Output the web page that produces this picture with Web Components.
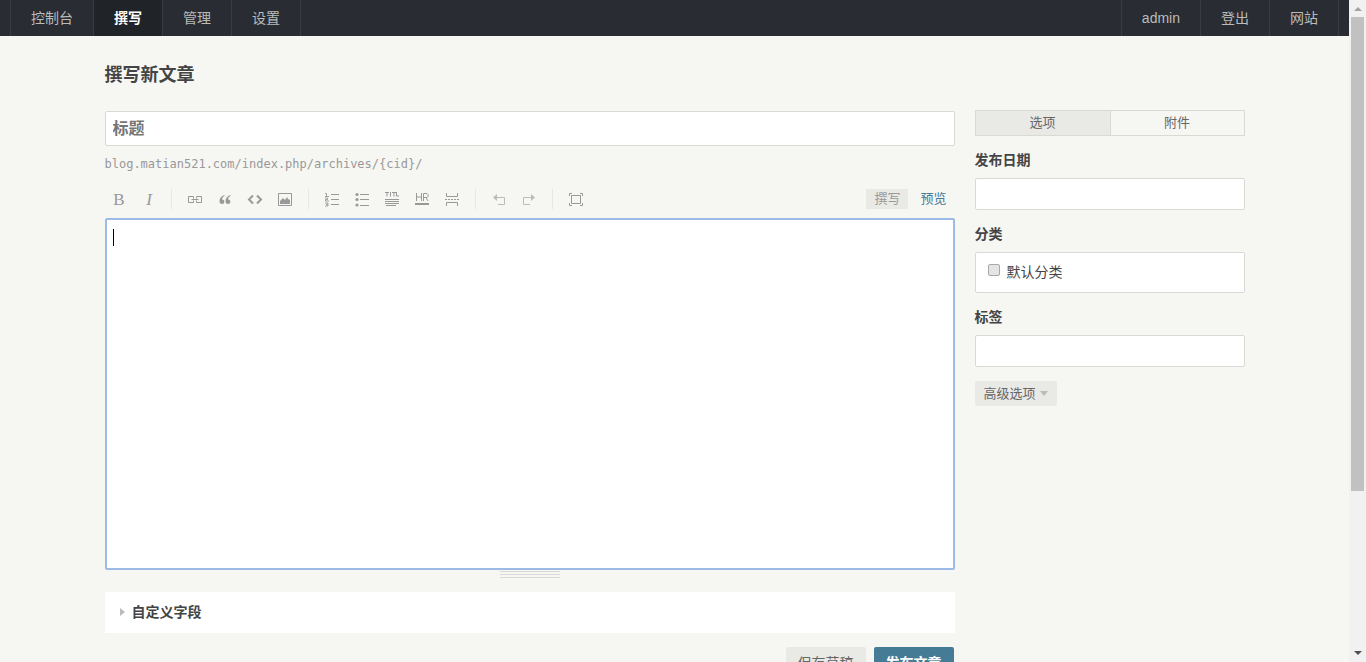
<!DOCTYPE html>
<html lang="zh">
<head>
<meta charset="utf-8">
<title>撰写新文章</title>
<style>
html, body { margin: 0; height: 100%; }
body {
  overflow: hidden;
  background: #f6f6f3;
  color: #444;
  font: 14px/20px "Liberation Sans", "Noto Sans CJK SC", sans-serif;
}
</style>
</head>
<body>
<app-window>
  <top-nav>
    <nav-item>控制台</nav-item>
    <nav-item current>撰写</nav-item>
    <nav-item>管理</nav-item>
    <nav-item>设置</nav-item>
    <nav-item slot="end">admin</nav-item>
    <nav-item slot="end">登出</nav-item>
    <nav-item slot="end">网站</nav-item>
  </top-nav>
  <write-page heading="撰写新文章">
    <post-editor></post-editor>
    <option-panel slot="side"></option-panel>
  </write-page>
</app-window>
<script>
function define(name, html, setup) {
  const tpl = document.createElement('template');
  tpl.innerHTML = html;
  customElements.define(name, class extends HTMLElement {
    constructor() {
      super();
      this.attachShadow({ mode: 'open' }).append(tpl.content.cloneNode(true));
    }
    connectedCallback() { if (setup) setup(this, this.shadowRoot); }
  });
}

define('scroll-bar', `
<style>
:host { display: flex; flex-direction: column; align-items: center; width: 17px; background: #f1f1f1; }
svg { display: block; width: 17px; height: 17px; }
.track { flex: 1; }
.thumb { width: 13px; height: 75.5%; background: #c1c1c1; }
</style>
<svg viewBox="0 0 17 17"><path d="M5 11l4-4 4 4z" fill="#a3a3a3"/></svg>
<div class="track"><div class="thumb"></div></div>
<svg viewBox="0 0 17 17"><path d="M5 6h8l-4 4z" fill="#505050"/></svg>
`);

define('app-window', `
<style>
:host { display: flex; height: 100vh; }
.view { flex: 1; min-width: 0; overflow: hidden; }
</style>
<div class="view"><slot></slot></div>
<scroll-bar></scroll-bar>
`);

define('nav-item', `
<style>
:host { display: block; border-right: 1px solid #383d45; }
a { display: block; padding: 0 20px; line-height: 36px; color: #bbb; text-decoration: none; }
:host([current]) a { background: #202328; color: #fff; font-weight: bold; }
</style>
<a href="#"><slot></slot></a>
`);

define('top-nav', `
<style>
:host { display: block; background: #292d33; }
nav { display: flex; justify-content: space-between; padding: 0 10px; height: 36px; }
div { display: flex; border-left: 1px solid #383d45; }
</style>
<nav><div><slot></slot></div><div><slot name="end"></slot></div></nav>
`);

define('write-page', `
<style>
:host { display: block; box-sizing: border-box; max-width: 1160px; margin: 0 auto; padding: 26px 10px; }
h2 { margin: 0 0 21px; font-size: 18px; line-height: 27px; }
.cols { display: grid; grid-template-columns: minmax(0, 1fr) 270px; gap: 20px; align-items: start; }
</style>
<h2></h2>
<div class="cols"><main><slot></slot></main><aside><slot name="side"></slot></aside></div>
`, (el, root) => { root.querySelector('h2').textContent = el.getAttribute('heading'); });

const line = 'fill="none" stroke="#999" ';
const icons = {
  bold: ['粗体', '<text x="9" y="14" text-anchor="middle" font-family="Liberation Serif, serif" font-size="17" fill="#999">B</text>'],
  italic: ['斜体', '<text x="9" y="14" text-anchor="middle" font-family="Liberation Serif, serif" font-style="italic" font-size="17" fill="#999">I</text>'],
  link: ['链接', `<path ${line} d="M6.500 5.500V5.500H1.500v6h5v-2M9.500 7.500v-2h5v6h-5v-2M4.500 8.500h7M6.500 5.500v2"/>`],
  quote: ['引用', '<path fill="#999" d="M7.500 4C4 5 2.500 7.500 2.500 10.200 2.500 12 3.500 13 5 13c1.400 0 2.300-1 2.300-2.300C7.300 9.300 6.400 8.500 5.100 8.500 5.200 6.800 6 5.700 7.700 4.800zM13.500 4C10 5 8.500 7.500 8.500 10.200c0 1.800 1 2.800 2.500 2.800 1.400 0 2.300-1 2.300-2.300 0-1.400-.9-2.200-2.200-2.200.1-1.700.9-2.800 2.600-3.700z"/>'],
  code: ['代码', '<path fill="none" stroke="#999" stroke-width="2" d="M6 4.500L2 8.500l4 4M10 4.500l4 4-4 4"/>'],
  image: ['图片', `<path ${line} d="M1.500 2.500h13v12h-13z"/><path fill="#999" d="M3 13V10l3-3 2 2 2-3 1 2 2 1v4z"/>`],
  ol: ['数字列表', `<path ${line} d="M7 3.500h8M7 8.500h8M7 13.500h8"/><path ${line} stroke-width=".9" d="M1 2.500h1.500V5M1 5.500h4M1 7h2.500v1.500H1.500V10H5M1 12h3v3H1M2 13.500h2"/>`],
  ul: ['普通列表', `<path ${line} d="M6 3.500h9M6 8.500h9M6 14.500h9"/><circle cx="3" cy="3.500" r="1.600" fill="#999"/><circle cx="3" cy="8.500" r="1.600" fill="#999"/><circle cx="3" cy="14" r="1.600" fill="#999"/>`],
  heading: ['标题', `<path ${line} d="M1 1.500h4M3 1v4.500M6.500 1v4.500M8 1.500h4M10 1v4.500M12.500 1v4h2.500M1 8.500h14M1 10.500h14M1 12.500h14M2 14.500h10"/>`],
  hr: ['分割线', `<path ${line} d="M2.500 2v8M7.500 2v8M2.500 6h5M9.500 10V2.500h3.500l1 1v2l-1 1H9.500M12 6.500l2 3.500"/><path fill="#999" d="M1 12h14v2H1z"/>`],
  more: ['摘要分割线', `<path ${line} d="M2.500 2v3.500h11V2M2.500 15v-3.500h11V15"/><path ${line} stroke-dasharray="2 1" d="M1 8.500h14"/>`],
  undo: ['撤销', '<path fill="none" stroke="#bbb" d="M5 6.500h8.500v7H7"/><path fill="#bbb" d="M2 6.500L6 3v7z"/>'],
  redo: ['重做', '<path fill="none" stroke="#bbb" d="M11 6.500H2.500v7H9"/><path fill="#bbb" d="M14 6.500L10 3v7z"/>'],
  full: ['全屏', `<path ${line} d="M3.500 4.500h9v8h-9zM1.500 5V2.500H4M12 2.500h2.500V5M14.500 12v2.500H12M4 14.500H1.500V12"/>`]
};
define('tool-button', `
<style>
:host { display: block; }
button { display: block; width: 26px; height: 20px; padding: 2px 5px; border: 0; background: none; }
svg { display: block; width: 16px; height: 16px; overflow: visible; }
</style>
<button type="button"><svg viewBox="0 0 16 16"></svg></button>
`, (el, root) => {
  const [label, shape] = icons[el.getAttribute('icon')];
  root.querySelector('button').setAttribute('aria-label', label);
  root.querySelector('svg').innerHTML = shape;
});

define('editor-toolbar', `
<style>
:host { display: flex; align-items: center; justify-content: space-between; height: 20px; }
.tools { display: flex; gap: 4px; }
i { width: 1px; height: 20px; margin: 0 6px; background: #e6e6e3; }
.tabs { display: flex; gap: 4px; }
.tabs a { padding: 0 8px; font-size: 13px; line-height: 20px; color: #467b96; text-decoration: none; }
.tabs a.on { background: #e9e9e6; color: #999; }
</style>
<div class="tools">
  <tool-button icon="bold"></tool-button><tool-button icon="italic"></tool-button><i></i>
  <tool-button icon="link"></tool-button><tool-button icon="quote"></tool-button><tool-button icon="code"></tool-button><tool-button icon="image"></tool-button><i></i>
  <tool-button icon="ol"></tool-button><tool-button icon="ul"></tool-button><tool-button icon="heading"></tool-button><tool-button icon="hr"></tool-button><tool-button icon="more"></tool-button><i></i>
  <tool-button icon="undo"></tool-button><tool-button icon="redo"></tool-button><i></i>
  <tool-button icon="full"></tool-button>
</div>
<div class="tabs"><a class="on" href="#">撰写</a><a href="#">预览</a></div>
`);

define('post-editor', `
<style>
:host { display: block; }
input, textarea { display: block; box-sizing: border-box; width: 100%; font-family: inherit; background: #fff; }
input { margin-top: 1px; height: 35px; padding: 0 7px; border: 1px solid #d9d9d6; border-radius: 2px; font-size: 16px; font-weight: bold; }
input::placeholder { color: #757575; }
.url { margin: 8px 0 15px; font: 12px/20px "DejaVu Sans Mono", monospace; color: #999; }
.area { position: relative; margin-top: 9px; }
textarea { height: 352px; padding: 8px; border: 2px solid #9bbbe6; border-radius: 2px; resize: none; outline: 0; font-size: 14px; }
.caret { position: absolute; left: 8px; top: 11px; width: 1px; height: 17px; background: #000; }
.grip { width: 60px; height: 5px; margin: 1px auto 14px; border-top: 1px solid #d9d9d6; border-bottom: 1px solid #d9d9d6; display: flex; align-items: center; }
.grip::before { content: ""; flex: 1; height: 1px; background: #d9d9d6; }
.fields { box-sizing: border-box; height: 41px; padding: 10px 15px; background: #fff; }
.fields button { display: flex; align-items: center; gap: 7px; height: 20px; padding: 0; border: 0; background: none; font: inherit; font-weight: bold; color: inherit; }
.fields svg { display: block; width: 5px; height: 8px; }
.actions { display: flex; justify-content: flex-end; gap: 8px; margin-top: 14px; padding-right: 1px; }
.actions button { height: 32px; padding: 0 12px; border: 0; border-radius: 2px; background: #e9e9e6; color: #666; font: inherit; }
.actions .primary { background: #467b96; color: #fff; font-weight: bold; }
</style>
<input type="text" placeholder="标题" aria-label="标题">
<p class="url">blog.matian521.com/index.php/archives/{cid}/</p>
<editor-toolbar></editor-toolbar>
<div class="area"><textarea aria-label="文章内容"></textarea><span class="caret"></span></div>
<div class="grip"></div>
<div class="fields"><button type="button"><svg viewBox="0 0 5 8"><path d="M0 0l5 4-5 4z" fill="#bbb"/></svg>自定义字段</button></div>
<div class="actions"><button type="button">保存草稿</button><button class="primary" type="button">发布文章</button></div>
`);

define('option-panel', `
<style>
:host { display: block; }
.tabs { display: grid; grid-template-columns: 1fr 1fr; border: 1px solid #d9d9d6; }
.tabs a { line-height: 24px; font-size: 13px; text-align: center; text-decoration: none; color: #666; }
.tabs a.on { background: #e9e9e6; }
.tabs a + a { border-left: 1px solid #d9d9d6; }
.title { display: block; margin: 14px 0 8px; font-weight: bold; }
input[type=text] { display: block; box-sizing: border-box; width: 100%; height: 32px; padding: 7px; border: 1px solid #d9d9d6; border-radius: 2px; background: #fff; font: inherit; }
.list { display: flex; box-sizing: border-box; height: 41px; padding: 9px 12px; border: 1px solid #d9d9d6; border-radius: 2px; background: #fff; }
.list input { appearance: none; width: 12px; height: 12px; margin: 2px 7px 0 0; border: 1px solid #a8a8a8; border-radius: 2px; background: #e4e4e4; }
.more { display: flex; align-items: center; gap: 4px; height: 25px; margin-top: 14px; padding: 0 9px; border: 0; border-radius: 2px; background: #e9e9e6; color: #666; font: inherit; font-size: 13px; }
.more svg { display: block; width: 8px; height: 5px; }
</style>
<div class="tabs"><a class="on" href="#">选项</a><a href="#">附件</a></div>
<label class="title" for="date">发布日期</label>
<input type="text" id="date">
<span class="title">分类</span>
<div class="list"><input type="checkbox" id="cat"><label for="cat">默认分类</label></div>
<label class="title" for="tags">标签</label>
<input type="text" id="tags">
<button class="more" type="button">高级选项<svg viewBox="0 0 8 5"><path d="M0 0h8L4 5z" fill="#bbb"/></svg></button>
`);
</script>
</body>
</html>
